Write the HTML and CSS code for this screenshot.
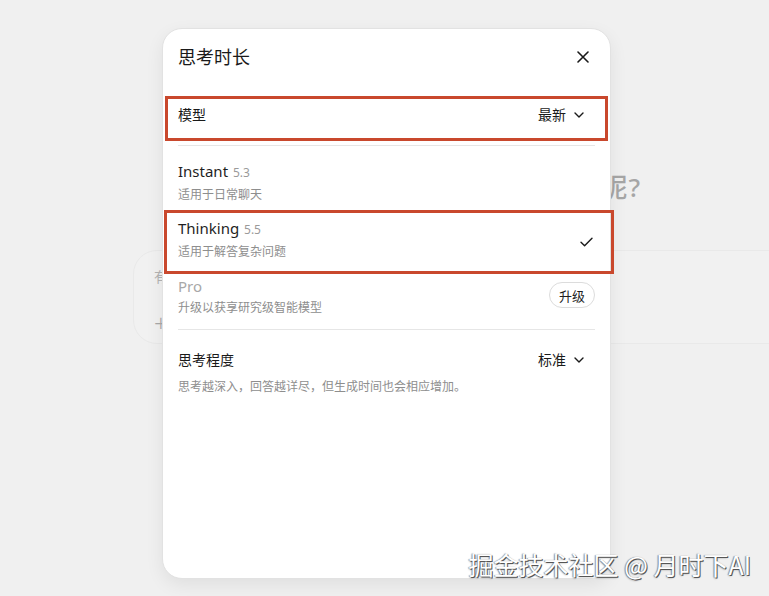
FILE: index.html
```html
<!DOCTYPE html>
<html lang="zh-CN">
<head>
<meta charset="utf-8">
<title>思考时长</title>
<link rel="stylesheet" href="styles.css">
</head>
<body>
<div class="page">
  <h1 class="hero">今天想聊点什么呢?</h1>
  <div class="composer">
    <div class="placeholder">有问题</div>
    <div class="plus">+</div>
  </div>
</div>

<div class="modal">
  <div class="modal-header">
    <h2 class="modal-title">思考时长</h2>
    <button class="close" aria-label="关闭">
      <svg width="12" height="12" viewBox="0 0 12 12"><path d="M1 1L11 11M11 1L1 11" stroke="#1a1a1a" stroke-width="1.6" stroke-linecap="round"/></svg>
    </button>
  </div>

  <div class="select-row model-row">
    <span class="row-label">模型</span>
    <span class="select">最新
      <svg class="chev" width="10" height="6" viewBox="0 0 10 6"><path d="M1 1L5 5L9 1" fill="none" stroke="#1a1a1a" stroke-width="1.4" stroke-linecap="round" stroke-linejoin="round"/></svg>
    </span>
  </div>
  <div class="divider"></div>

  <div class="option">
    <div class="opt-text">
      <div class="opt-title">Instant <span class="ver">5.3</span></div>
      <div class="opt-sub">适用于日常聊天</div>
    </div>
  </div>
  <div class="option">
    <div class="opt-text">
      <div class="opt-title">Thinking <span class="ver">5.5</span></div>
      <div class="opt-sub">适用于解答复杂问题</div>
    </div>
    <svg class="check" width="13" height="10" viewBox="0 0 13 10"><path d="M1 5.2L4.6 8.8L12 1.2" fill="none" stroke="#1a1a1a" stroke-width="1.4" stroke-linecap="round" stroke-linejoin="round"/></svg>
  </div>
  <div class="option">
    <div class="opt-text">
      <div class="opt-title muted">Pro</div>
      <div class="opt-sub">升级以获享研究级智能模型</div>
    </div>
    <button class="upgrade">升级</button>
  </div>
  <div class="divider second"></div>

  <div class="select-row effort-row">
    <span class="row-label">思考程度</span>
    <span class="select">标准
      <svg class="chev" width="10" height="6" viewBox="0 0 10 6"><path d="M1 1L5 5L9 1" fill="none" stroke="#1a1a1a" stroke-width="1.4" stroke-linecap="round" stroke-linejoin="round"/></svg>
    </span>
  </div>
  <p class="desc">思考越深入，回答越详尽，但生成时间也会相应增加。</p>

  <div class="mark mark-model"></div>
  <div class="mark mark-thinking"></div>
</div>

<div class="watermark">掘金技术社区 @ 月时下AI</div>
</body>
</html>
```

FILE: styles.css
```css
* { box-sizing: border-box; }
html, body {
  margin: 0;
  padding: 0;
}
body {
  width: 769px;
  height: 596px;
  overflow: hidden;
  position: relative;
  background: #f0f0f0;
  font-family: "Noto Sans", "Noto Sans CJK SC", sans-serif;
  color: #1f1f1f;
}

/* dimmed page behind the dialog */
.page {
  padding-top: 171px;
}
.hero {
  margin: 0;
  width: 641px;
  text-align: right;
  font-size: 26px;
  line-height: 32px;
  font-weight: 500;
  letter-spacing: 1px;
  color: #a6a6a6;
  white-space: nowrap;
}
.composer {
  margin: 47px 0 0 133px;
  width: 720px;
  height: 94px;
  border-radius: 24px;
  background: #f1f1f1;
  border: 1px solid #e9e9e9;
  padding: 16px 0 0 20px;
}
.placeholder {
  font-size: 14px;
  line-height: 20px;
  color: #b3b3b3;
}
.plus {
  margin-top: 24px;
  font-size: 24px;
  line-height: 24px;
  color: #a8a8a8;
  font-weight: 300;
}

/* dialog */
.modal {
  position: absolute;
  left: 162px;
  top: 28px;
  width: 449px;
  height: 551px;
  background: #fff;
  border: 1px solid #e2e2e2;
  border-radius: 20px;
  box-shadow: 0 6px 18px rgba(0,0,0,0.07);
  padding: 0 15px;
}
.modal-header {
  height: 57px;
  display: flex;
  align-items: center;
  justify-content: space-between;
}
.modal-title {
  margin: 0;
  font-size: 18px;
  line-height: 24px;
  font-weight: 400;
  color: #1a1a1a;
  margin-top: -2px;
}
.close {
  width: 24px;
  height: 24px;
  border: 0;
  padding: 0;
  background: none;
  display: flex;
  align-items: center;
  justify-content: center;
  margin-top: -2px;
}

.select-row {
  display: flex;
  align-items: center;
  justify-content: space-between;
  padding-right: 11px;
}
.model-row {
  margin-top: 6px;
  height: 46px;
}
.row-label {
  font-size: 14px;
  line-height: 20px;
  color: #1a1a1a;
}
.select {
  display: flex;
  align-items: center;
  gap: 8px;
  font-size: 14px;
  line-height: 20px;
  color: #1a1a1a;
}
.divider {
  height: 1px;
  background: #e6e6e6;
  margin-top: 7px;
  margin-bottom: 8px;
}
.divider.second {
  margin-top: 4px;
  margin-bottom: 0;
}

.option {
  display: flex;
  align-items: center;
  justify-content: space-between;
  padding: 8px 0;
  height: 57px;
}
.opt-title {
  font-size: 15px;
  line-height: 20px;
  color: #1f1f1f;
}
.opt-title.muted { color: #a8a8a8; }
.ver {
  font-size: 12px;
  color: #9a9a9a;
  margin-left: 1px;
}
.opt-sub {
  margin-top: 3px;
  font-size: 12px;
  line-height: 18px;
  color: #8e8e8e;
}
.check {
  margin-right: 2px;
  margin-top: 4px;
}
.upgrade {
  width: 46px;
  height: 26px;
  border-radius: 13px;
  border: 1px solid #dcdcdc;
  background: #fff;
  font-family: inherit;
  font-size: 13px;
  color: #1f1f1f;
  padding: 0;
  margin-top: -3px;
}

.effort-row {
  margin-top: 12px;
  height: 36px;
}
.desc {
  margin: 0;
  font-size: 12px;
  line-height: 18px;
  color: #8e8e8e;
}

/* annotation boxes drawn over the dialog */
.mark {
  position: absolute;
  border: 3px solid #c9482d;
  pointer-events: none;
}
.mark-model {
  left: 2px;
  top: 67px;
  width: 443px;
  height: 45px;
}
.mark-thinking {
  left: 1px;
  top: 181px;
  width: 450px;
  height: 64px;
}

.watermark {
  position: absolute;
  right: 18px;
  top: 548px;
  font-size: 25px;
  line-height: 32px;
  color: #fff;
  white-space: nowrap;
  font-family: "Noto Sans CJK SC", "Noto Sans", sans-serif;
  text-shadow: 1px 1px 0 #555, -1px 0 1px rgba(0,0,0,0.35), 0 1px 2px rgba(0,0,0,0.4);
}
```
